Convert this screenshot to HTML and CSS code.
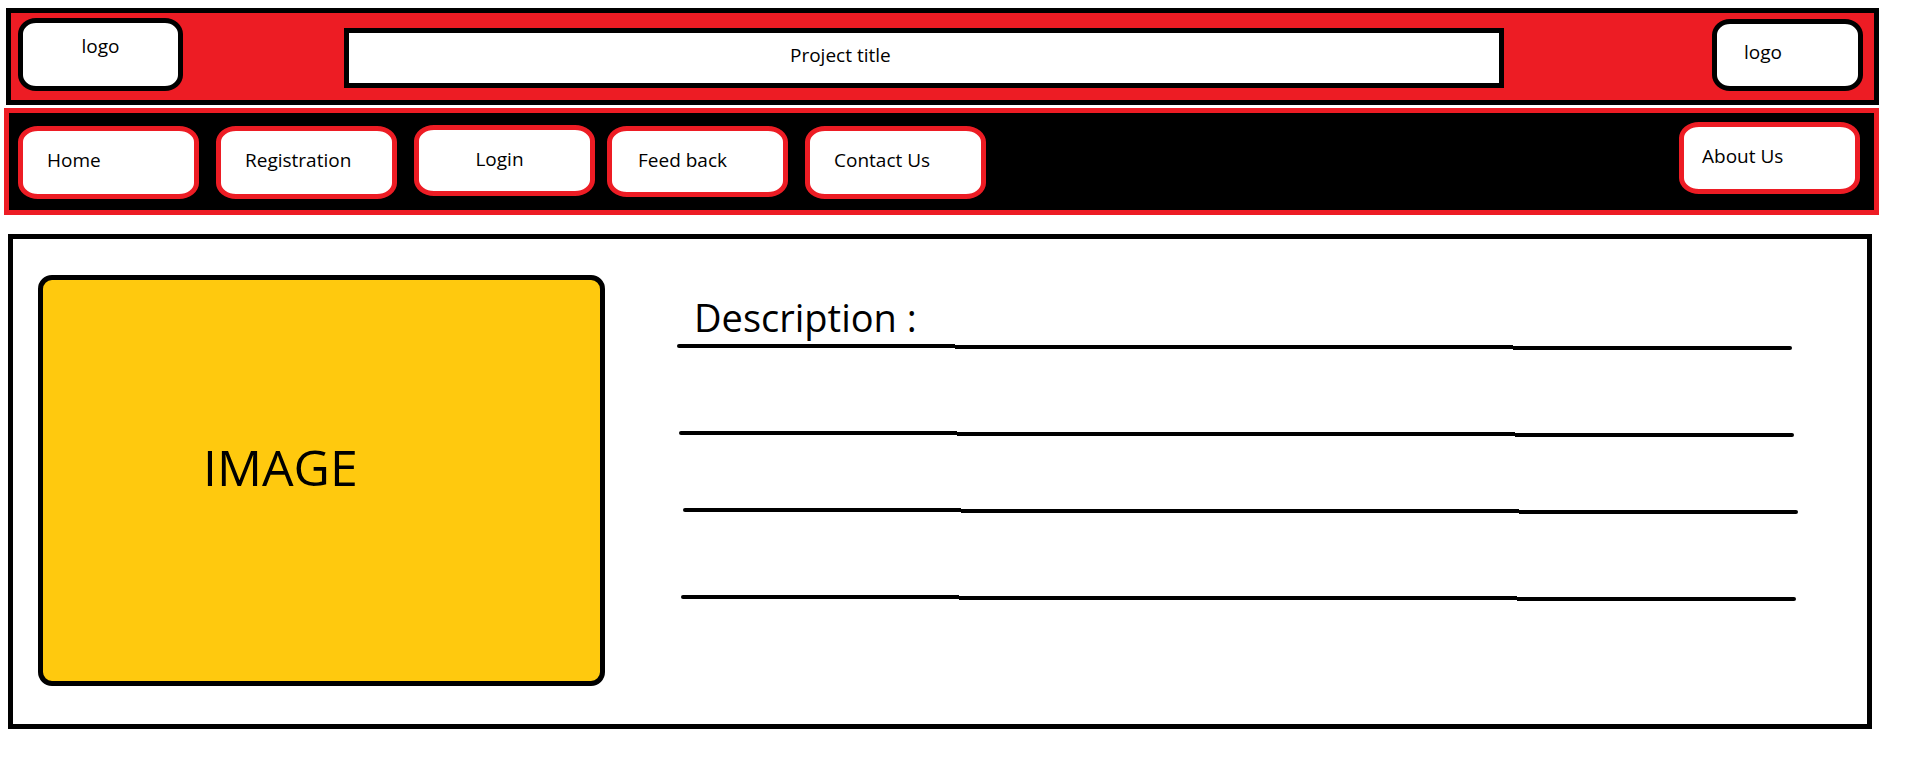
FILE: index.html
```html
<!DOCTYPE html>
<html lang="en">
<head>
<meta charset="utf-8">
<title>Project wireframe</title>
<link rel="stylesheet" href="styles.css">
</head>
<body>
  <header class="topbar">
    <div class="logo">logo</div>
    <div class="title">Project title</div>
    <div class="logo logo--right">logo</div>
  </header>

  <nav class="navbar">
    <a class="nav-btn">Home</a>
    <a class="nav-btn">Registration</a>
    <a class="nav-btn nav-btn--center">Login</a>
    <a class="nav-btn nav-btn--tight">Feed back</a>
    <a class="nav-btn">Contact Us</a>
    <a class="nav-btn nav-btn--end">About Us</a>
  </nav>

  <main class="content">
    <div class="image-box"><span class="image-label">IMAGE</span></div>
    <section class="desc">
      <h1 class="desc-title">Description :</h1>
      <div class="rule rule--1"><span class="seg seg--a"></span><span class="seg seg--b"></span><span class="seg seg--c"></span></div>
      <div class="rule rule--2"><span class="seg seg--a"></span><span class="seg seg--b"></span><span class="seg seg--c"></span></div>
      <div class="rule rule--3"><span class="seg seg--a"></span><span class="seg seg--b"></span><span class="seg seg--c"></span></div>
      <div class="rule rule--4"><span class="seg seg--a"></span><span class="seg seg--b"></span><span class="seg seg--c"></span></div>
    </section>
  </main>
</body>
</html>
```

FILE: styles.css
```css
* {
  box-sizing: border-box;
}

html, body {
  margin: 0;
  padding: 0;
  background: #ffffff;
}

body {
  width: 1914px;
  height: 768px;
  overflow: hidden;
  font-family: "Open Sans", "Noto Sans", sans-serif;
  color: #000000;
}

/* ---------- Top bar ---------- */
.topbar {
  display: flex;
  align-items: flex-start;
  margin: 8px 0 0 6px;
  width: 1873px;
  height: 97px;
  padding: 5px 11px 0 7px;
  background: #ed1c24;
  border: 5px solid #000000;
}

.logo {
  width: 165px;
  height: 73px;
  padding-top: 13px;
  background: #ffffff;
  border: 5px solid #000000;
  border-radius: 18px / 16px;
  font-size: 19px;
  line-height: 20px;
  text-align: center;
}

.logo--right {
  width: 151px;
  height: 72px;
  margin-top: 1px;
  margin-left: auto;
  padding-top: 18px;
  padding-left: 27px;
  text-align: left;
}

.title {
  width: 1160px;
  height: 60px;
  margin: 10px 0 0 161px;
  padding: 12px 0 0 441px;
  background: #ffffff;
  border: 5px solid #000000;
  font-size: 19px;
  line-height: 20px;
  white-space: nowrap;
}

/* ---------- Navigation ---------- */
.navbar {
  display: flex;
  align-items: flex-start;
  gap: 17px;
  margin: 3px 0 0 4px;
  width: 1875px;
  height: 107px;
  padding: 13px 14px 0 9px;
  background: #000000;
  border: 5px solid #ed1c24;
}

.nav-btn {
  display: block;
  width: 181px;
  height: 73px;
  padding: 19px 0 0 24px;
  background: #ffffff;
  border: 5px solid #ed1c24;
  border-radius: 20px / 16px;
  font-size: 19px;
  line-height: 20px;
  color: #000000;
  text-decoration: none;
  white-space: nowrap;
}

.nav-btn--center {
  padding-left: 0;
  padding-right: 10px;
  text-align: center;
  height: 71px;
  margin-top: -1px;
}

.nav-btn--tight {
  margin-left: -5px;
  height: 71px;
  padding-left: 26px;
}

.nav-btn--end {
  margin-left: auto;
  margin-top: -4px;
  height: 72px;
  padding-left: 18px;
}

/* ---------- Content ---------- */
.content {
  display: flex;
  align-items: flex-start;
  margin: 19px 0 0 8px;
  width: 1864px;
  height: 495px;
  padding: 36px 0 0 25px;
  border: 5px solid #000000;
  background: #ffffff;
}

.image-box {
  flex: none;
  width: 567px;
  height: 411px;
  padding: 162px 0 0 160px;
  background: #ffc90e;
  border: 5px solid #000000;
  border-radius: 14px;
}

.image-label {
  display: block;
  font-size: 50px;
  line-height: 50px;
  white-space: nowrap;
}

.desc {
  margin-left: 72px;
  padding-top: 22px;
  width: 1130px;
}

.desc-title {
  margin: 0;
  padding-left: 17px;
  font-size: 38px;
  font-weight: 400;
  line-height: 41px;
  white-space: nowrap;
}

.rule {
  display: flex;
  align-items: flex-start;
  height: 6px;
}

.rule--1 { margin-top: 6px; }
.rule--2 { margin-top: 81px; margin-left: 2px; }
.rule--3 { margin-top: 71px; margin-left: 6px; }
.rule--4 { margin-top: 81px; margin-left: 4px; }

.seg {
  display: block;
  height: 4px;
  background: #000000;
}

.seg--a {
  width: 278px;
  border-radius: 2px 0 0 2px;
}

.seg--b {
  width: 558px;
  margin-top: 1px;
}

.seg--c {
  width: 279px;
  margin-top: 2px;
  border-radius: 0 2px 2px 0;
}
```
